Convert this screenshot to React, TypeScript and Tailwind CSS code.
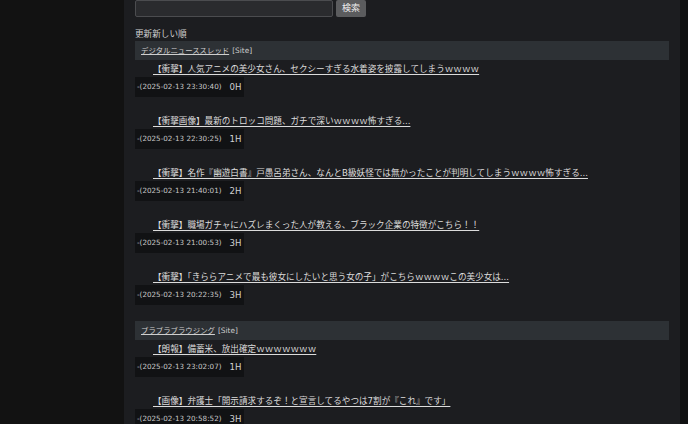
const groups = [
  {
    site: 'デジタルニューススレッド',
    items: [
      { title: '【衝撃】人気アニメの美少女さん、セクシーすぎる水着姿を披露してしまうｗｗｗｗ', date: '2025-02-13 23:30:40', ago: '0H' },
      { title: '【衝撃画像】最新のトロッコ問題、ガチで深いｗｗｗｗ怖すぎる...', date: '2025-02-13 22:30:25', ago: '1H' },
      { title: '【衝撃】名作『幽遊白書』戸愚呂弟さん、なんとB級妖怪では無かったことが判明してしまうｗｗｗｗ怖すぎる...', date: '2025-02-13 21:40:01', ago: '2H' },
      { title: '【衝撃】職場ガチャにハズレまくった人が教える、ブラック企業の特徴がこちら！！', date: '2025-02-13 21:00:53', ago: '3H' },
      { title: '【衝撃】「きららアニメで最も彼女にしたいと思う女の子」がこちらｗｗｗｗこの美少女は...', date: '2025-02-13 20:22:35', ago: '3H' },
    ],
  },
  {
    site: 'ブラブラブラウジング',
    items: [
      { title: '【朗報】備蓄米、放出確定ｗｗｗｗｗｗｗ', date: '2025-02-13 23:02:07', ago: '1H' },
      { title: '【画像】弁護士「開示請求するぞ！と宣言してるやつは7割が『これ』です」', date: '2025-02-13 20:58:52', ago: '3H' },
    ],
  },
]

const font = { fontFamily: '"DejaVu Sans", "Noto Sans CJK JP", sans-serif' }

export default function App() {
  return (
    <div className="flex w-[688px] h-[424px] overflow-hidden bg-[#121212] text-[#d6d6d6]" style={font}>
      <div className="w-[124px] shrink-0" />
      <div className="w-[556px] shrink-0 bg-[#1c1d20] px-[11px]">
        <div className="flex items-center gap-[3px] h-[17px]">
          <div className="w-[198px] h-[17px] bg-[#2a2b2e] border border-[#4b4c4f] rounded-[2px]" />
          <button className="w-[30px] h-[17px] bg-[#5b5c5e] text-[#eeeeee] text-[9px] leading-[17px] rounded-[2px]">検索</button>
        </div>
        <div className="mt-[10px] text-[8.6px] leading-[14px] text-[#d0d0d0]">更新新しい順</div>
        {groups.map((g) => (
          <div key={g.site} className="mb-[1px]">
            <div className="h-[19px] bg-[#2d3135] flex items-center pl-[6px] text-[7.4px] text-[#cfcfcf] gap-[3px]">
              <span className="underline">{g.site}</span>
              <span>[Site]</span>
            </div>
            {g.items.map((it) => (
              <div key={it.title} className="pt-[2px] pb-[15px]">
                <div className="pl-[18px] text-[8.6px] leading-[14px] whitespace-nowrap">
                  <span className="underline underline-offset-[2px] text-[#dcdcdc]">{it.title}</span>
                </div>
                <div className="flex w-fit items-center h-[20px] px-[2px] gap-[8px] bg-[#111214] mt-[1px]">
                  <span className="text-[7.2px] text-[#c8c8c8]">-({it.date})</span>
                  <span className="text-[8.6px] text-[#d0d0d0]">{it.ago}</span>
                </div>
              </div>
            ))}
          </div>
        ))}
      </div>
      <div className="flex-1 bg-[#0f1011]" />
    </div>
  )
}
